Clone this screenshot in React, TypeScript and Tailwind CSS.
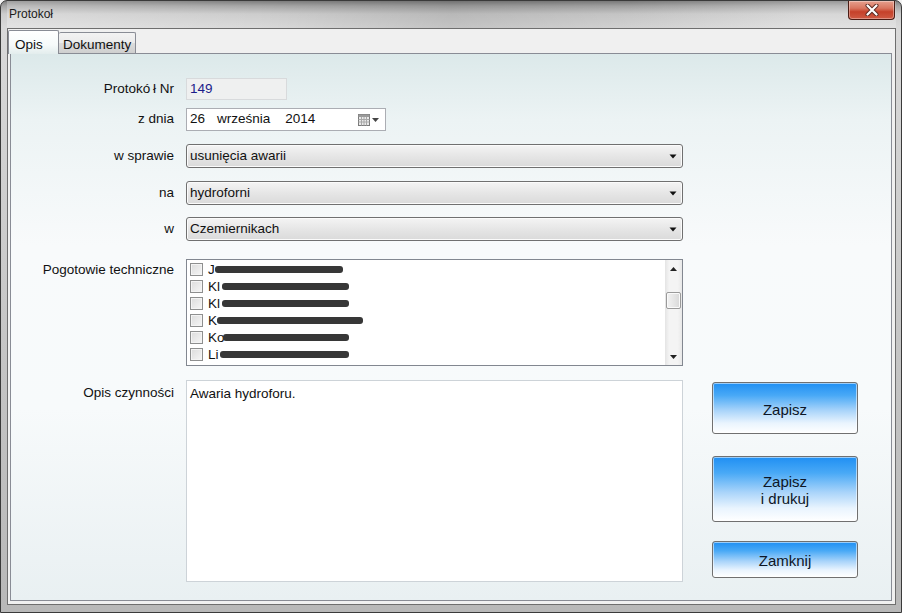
import React from "react";

const FONT = { fontFamily: '"Liberation Sans", Arial, sans-serif' };

function ComboArrow() {
  return (
    <svg width="8" height="5" viewBox="0 0 8 5" className="block">
      <path d="M0.5 0.5 L7.5 0.5 L4 4.5 Z" fill="#111" />
    </svg>
  );
}

function Combo({ value }: { value: string }) {
  return (
    <div className="flex h-[24px] w-[497px] items-center justify-between rounded-[3px] border border-[#707070] bg-[linear-gradient(to_bottom,#f4f4f4,#e6e6e6_50%,#dadada)] pl-[3px] pr-[5px] text-[13.5px] text-[#111] shadow-[inset_0_0_0_1px_#fbfbfb]">
      <span>{value}</span>
      <ComboArrow />
    </div>
  );
}

function Label({ children, className = "" }: { children: React.ReactNode; className?: string }) {
  return <div className={"w-[163px] shrink-0 text-right text-[13.5px] text-[#111] " + className}>{children}</div>;
}

const people: { prefix: string; ml: number; w: number }[] = [
  { prefix: "J", ml: 0, w: 128 },
  { prefix: "Kl", ml: 2, w: 127 },
  { prefix: "Kl", ml: 2, w: 127 },
  { prefix: "K", ml: 0, w: 146 },
  { prefix: "Ko", ml: -2, w: 126 },
  { prefix: "Li", ml: 1, w: 129 },
];

function Button({ children, h }: { children: React.ReactNode; h: string }) {
  return (
    <div
      className={
        "flex w-[146px] flex-col items-center justify-center rounded-[3px] border border-[#707070] bg-[linear-gradient(to_bottom,#1f8ff3_0%,#49a9f6_25%,#a9d4fa_55%,#e9f4fe_80%,#ffffff_100%)] pt-[2px] text-[15px] leading-[17px] text-[#0d1626] shadow-[inset_0_0_0_1px_rgba(255,255,255,0.55)] " +
        h
      }
    >
      {children}
    </div>
  );
}

export default function App() {
  return (
    <div className="h-[613px] w-[902px] overflow-hidden bg-[#f3f3f3]" style={FONT}>
      <div className="flex h-[613px] w-[902px] flex-col rounded-t-[7px] border border-[#3a3a3a] bg-[linear-gradient(to_bottom,#7e7e7e_0px,#a6a6a6_5px,#cdcdcd_13px,#d9d9d9_26px,#c4c4c4_60%,#b8b8b8_100%)] pb-[7px] pl-[6px] pr-[5px]">
        {/* title bar */}
        <div className="flex h-[27px] shrink-0 items-start justify-between bg-[linear-gradient(90deg,rgba(255,255,255,0.25),rgba(0,0,0,0)_28%,rgba(0,0,0,0.10)_50%,rgba(0,0,0,0.04)_70%,rgba(255,255,255,0.2)_90%)]">
          <div className="ml-[2px] pt-[6px] text-[12px] leading-[14px] text-[#1b1b1b]">Protokoł</div>
          <div className="mr-[1px] flex h-[19px] w-[47px] items-center justify-center rounded-b-[4px] border border-t-0 border-[#4a1c14] bg-[linear-gradient(to_bottom,#e6a08e_0%,#d97660_40%,#c5412a_60%,#cf5a43_100%)] shadow-[inset_0_0_0_1px_rgba(255,255,255,0.35)]">
            <svg width="14" height="12" viewBox="0 0 14 12">
              <path d="M2.5 1.5 L11.5 10.5 M11.5 1.5 L2.5 10.5" stroke="#5a2a22" strokeWidth="4" strokeLinecap="round" />
              <path d="M2.5 1.5 L11.5 10.5 M11.5 1.5 L2.5 10.5" stroke="#ffffff" strokeWidth="2.2" strokeLinecap="round" />
            </svg>
          </div>
        </div>

        {/* client area */}
        <div className="flex flex-1 flex-col border border-[#6e6e6e] bg-[#f0f0f0] pb-[3px]">
          {/* tabs */}
          <div className="flex h-[24px] shrink-0 items-end">
            <div className="relative z-10 mb-[-1px] flex h-[24px] w-[51px] items-start rounded-t-[2px] border border-b-0 border-[#898c95] bg-[linear-gradient(to_bottom,#ffffff,#f6fafa_60%,#e3eded)] pl-[6px] pt-[4px] text-[13.5px] text-[#111]">
              Opis
            </div>
            <div className="flex h-[21px] w-[77px] items-start rounded-t-[2px] border border-b-0 border-l-0 border-[#898c95] bg-[linear-gradient(to_bottom,#f3f3f3,#ebebeb_50%,#dcdcdc_50%,#cfcfcf)] pl-[4px] pt-[2px] text-[13.5px] text-[#111]">
              Dokumenty
            </div>
          </div>

          {/* tab page */}
          <div className="ml-[2px] mr-[3px] flex flex-1 flex-col border border-[#898c95] bg-[linear-gradient(to_bottom,#dce9ea_0%,#ecf3f4_12%,#f8fafb_35%,#f7fafb_65%,#e9f0f2_100%)] pt-[24px]">
            {/* Protokół Nr */}
            <div className="flex h-[22px] items-center">
              <Label>Protokó&#8201;ł Nr</Label>
              <div className="ml-[12px] flex h-[22px] w-[101px] items-center border border-[#d8dadc] bg-[#eff0f0] pl-[3px] text-[13.5px] text-[#1c1c8a]">
                149
              </div>
            </div>

            {/* z dnia */}
            <div className="mt-[8px] flex h-[23px] items-center">
              <Label>z dnia</Label>
              <div className="ml-[12px] flex h-[23px] w-[200px] items-center border border-[#abadb3] bg-white pl-[3px] pr-[6px] text-[13.5px] text-[#111]">
                <span>26</span>
                <span className="ml-[12px]">września</span>
                <span className="ml-[15px]">2014</span>
                <span className="ml-auto flex items-center gap-[2px]">
                  <svg width="12" height="12" viewBox="0 0 12 12" className="block">
                    <rect x="0.5" y="0.5" width="11" height="11" fill="#e9e9e9" stroke="#7a7a7a" />
                    <rect x="0.5" y="0.5" width="11" height="2.5" fill="#9a9a9a" />
                    <path d="M3.5 3 V11.5 M6 3 V11.5 M8.5 3 V11.5 M0.5 5.5 H11.5 M0.5 8 H11.5" stroke="#a8a8a8" strokeWidth="1" />
                  </svg>
                  <svg width="7" height="4" viewBox="0 0 7 4" className="block">
                    <path d="M0 0 L7 0 L3.5 4 Z" fill="#444" />
                  </svg>
                </span>
              </div>
            </div>

            {/* w sprawie */}
            <div className="mt-[13px] flex h-[24px] items-center">
              <Label>w sprawie</Label>
              <div className="ml-[12px]">
                <Combo value="usunięcia awarii" />
              </div>
            </div>

            {/* na */}
            <div className="mt-[13px] flex h-[24px] items-center">
              <Label>na</Label>
              <div className="ml-[12px]">
                <Combo value="hydroforni" />
              </div>
            </div>

            {/* w */}
            <div className="mt-[12px] flex h-[24px] items-center">
              <Label>w</Label>
              <div className="ml-[12px]">
                <Combo value="Czemiernikach" />
              </div>
            </div>

            {/* Pogotowie techniczne */}
            <div className="mt-[18px] flex items-start">
              <Label className="pt-[1px]">Pogotowie techniczne</Label>
              <div className="ml-[12px] flex h-[107px] w-[497px] border border-[#828790] bg-white">
                <div className="flex flex-1 flex-col pl-[3px] pt-[1px]">
                  {people.map((p, i) => (
                    <div key={i} className="flex h-[17px] items-center">
                      <span className="h-[13px] w-[13px] shrink-0 border border-[#8e8f8f] bg-[linear-gradient(135deg,#dcdcdc,#f6f6f6)] shadow-[inset_0_0_0_1px_#f4f4f4]" />
                      <span className="ml-[5px] text-[13.5px] leading-[15px] text-[#111]">{p.prefix}</span>
                      <span
                        className="inline-block h-[7px] rounded-[3px] bg-[#373737]"
                        style={{ marginLeft: p.ml, width: p.w }}
                      />
                    </div>
                  ))}
                </div>
                {/* scrollbar */}
                <div className="flex w-[17px] flex-col items-center bg-[linear-gradient(to_right,#e4e4e4,#f4f4f4_25%,#f4f4f4_75%,#e8e8e8)]">
                  <div className="flex h-[17px] items-center justify-center">
                    <svg width="7" height="4" viewBox="0 0 7 4"><path d="M0 4 L7 4 L3.5 0 Z" fill="#222" /></svg>
                  </div>
                  <div className="mt-[15px] h-[17px] w-[15px] rounded-[2px] border border-[#9a9a9a] bg-[linear-gradient(to_right,#f2f2f2,#e6e6e6_50%,#d8d8d8)] shadow-[inset_0_0_0_1px_#fafafa]" />
                  <div className="mt-auto flex h-[17px] items-center justify-center">
                    <svg width="7" height="4" viewBox="0 0 7 4"><path d="M0 0 L7 0 L3.5 4 Z" fill="#222" /></svg>
                  </div>
                </div>
              </div>
            </div>

            {/* Opis czynności + buttons */}
            <div className="mt-[14px] flex items-start">
              <Label className="pt-[3px]">Opis czynności</Label>
              <div className="ml-[12px] h-[202px] w-[497px] border border-[#cdd3d8] bg-white pl-[3px] pt-[3px] text-[13.5px] text-[#111]">
                Awaria hydroforu.
              </div>
              <div className="ml-[29px] flex flex-col pt-[2px]">
                <Button h="h-[52px]">Zapisz</Button>
                <Button h="mt-[22px] h-[66px]">
                  <span>Zapisz</span>
                  <span>i drukuj</span>
                </Button>
                <Button h="mt-[19px] h-[37px]">Zamknij</Button>
              </div>
            </div>
          </div>
        </div>
      </div>
    </div>
  );
}
